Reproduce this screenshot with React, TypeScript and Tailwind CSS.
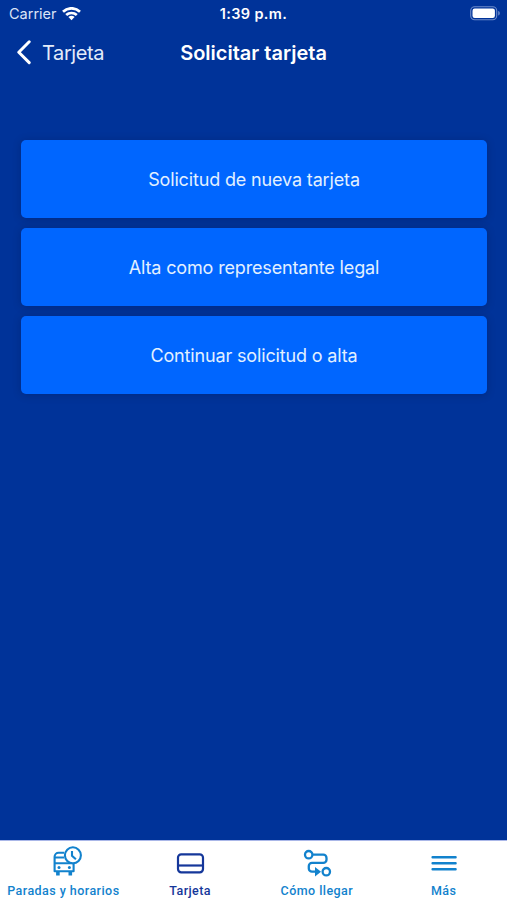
import type { ReactNode } from 'react';

const actions = [
  { id: 'new', label: 'Solicitud de nueva tarjeta' },
  { id: 'legal', label: 'Alta como representante legal' },
  { id: 'continue', label: 'Continuar solicitud o alta' },
];

function WifiIcon() {
  return (
    <svg width="19" height="15" viewBox="0 0 19 15" fill="none" stroke="white" strokeWidth="2.7">
      <path d="M1 4.7a12.3 12.3 0 0 1 17 0" />
      <path d="M4.2 8.1a7.7 7.7 0 0 1 10.6 0" />
      <path d="M9.5 13.2 6.4 10.1a4.5 4.5 0 0 1 6.2 0z" fill="white" stroke="none" />
    </svg>
  );
}

function BatteryIcon() {
  return (
    <svg width="31" height="15" viewBox="0 0 31 15" fill="none">
      <rect x="0.7" y="0.7" width="26" height="13" rx="4" stroke="#6d8cca" strokeWidth="1.1" />
      <rect x="2.5" y="2.5" width="22.4" height="9.4" rx="2.2" fill="white" />
      <path d="M28.2 5v4.6c1-.3 1.6-1.2 1.6-2.3S29.2 5.3 28.2 5z" fill="#6d8cca" />
    </svg>
  );
}

function BusClockIcon() {
  return (
    <svg width="34" height="32" viewBox="0 0 34 32" fill="none" stroke="currentColor" strokeWidth="2.1" className="ml-[6px]">
      <path d="M15 7.8H9.6a4 4 0 0 0-4 4V26.3h19v-8" strokeLinejoin="round" />
      <path d="M6 12.5h9M6 18.3h18.6" />
      <path d="M8.9 27v3.6M21.3 27v3.6" strokeWidth="3.6" />
      <circle cx="10" cy="22.5" r="1.5" fill="currentColor" stroke="none" />
      <circle cx="20.4" cy="22.5" r="1.5" fill="currentColor" stroke="none" />
      <circle cx="23.9" cy="10.3" r="8" fill="white" />
      <path d="M23 5.9v4.9l3.9 3.4" />
    </svg>
  );
}

function CardIcon() {
  return (
    <svg width="32" height="32" viewBox="0 0 32 32" fill="none" stroke="currentColor" strokeWidth="2.2">
      <rect x="4" y="9.3" width="25" height="18" rx="3.2" />
      <path d="M4 20.5h25" />
    </svg>
  );
}

function RouteIcon() {
  return (
    <svg width="32" height="32" viewBox="0 0 32 32" fill="none" stroke="currentColor" strokeWidth="2.3">
      <circle cx="7.7" cy="9.7" r="3.7" />
      <circle cx="25.3" cy="26.7" r="3.7" />
      <path d="M11.5 9.7h10.8a3.2 3.2 0 0 1 3.2 3.2v1.8a3.2 3.2 0 0 1-3.2 3.2H11a3.2 3.2 0 0 0-3.2 3.2v2.4A3.2 3.2 0 0 0 11 26.7h4" />
      <path d="m14 22 6 4.7-6 4.7z" fill="currentColor" stroke="none" />
    </svg>
  );
}

function MenuIcon() {
  return (
    <svg width="32" height="32" viewBox="0 0 32 32" fill="none" stroke="currentColor" strokeWidth="2.4">
      <path d="M4.6 12.3h23M4.6 18.3h23M4.6 24.3h23" strokeLinecap="round" />
    </svg>
  );
}

interface TabProps {
  icon: ReactNode;
  label: string;
  active?: boolean;
}

function Tab({ icon, label, active }: TabProps) {
  return (
    <button
      className={`flex flex-col items-center pt-1 ${active ? 'text-[#15379a]' : 'text-[#1282cd]'}`}
    >
      {icon}
      <span className="mt-[6px] whitespace-nowrap font-['Roboto',sans-serif] text-[12.5px] font-medium leading-4 tracking-[0.45px]">
        {label}
      </span>
    </button>
  );
}

export default function App() {
  return (
    <div className="flex h-[900px] w-[507px] flex-col overflow-hidden bg-[#003399] font-['Inter',sans-serif] text-white">
      {/* Status bar */}
      <div className="grid h-7 grid-cols-3 items-center px-[9px]">
        <div className="flex items-center gap-[5px] text-[14.5px] text-[#dbe4f6]">
          <span>Carrier</span>
          <WifiIcon />
        </div>
        <span className="text-center text-[14.5px] font-semibold tracking-[0.35px]">1:39 p.m.</span>
        <div className="-mr-[3px] flex justify-end pb-px">
          <BatteryIcon />
        </div>
      </div>

      {/* Navigation bar */}
      <header className="grid h-12 grid-cols-[1fr_auto_1fr] items-center pt-px">
        <button className="flex items-center gap-[10px] pl-[16px] text-[20px] tracking-[-0.4px] text-[#e3ebfa]">
          <svg width="16" height="26" viewBox="0 0 16 26" fill="none" stroke="white" strokeWidth="3">
            <path d="M13.2 1.8 2.8 12.2l10.4 10.4" strokeLinecap="round" strokeLinejoin="round" />
          </svg>
          <span>Tarjeta</span>
        </button>
        <h1 className="text-[20px] font-semibold">Solicitar tarjeta</h1>
      </header>

      <main className="flex flex-1 flex-col gap-[10px] pl-[21px] pr-[20px] pt-16">
        {actions.map((action) => (
          <button
            key={action.id}
            className="h-[78px] rounded-[5px] bg-[#0066ff] text-[18px] tracking-[-0.15px] text-[#e2f0ff] shadow-[0_1px_8px_rgba(0,0,40,0.22)]"
          >
            {action.label}
          </button>
        ))}
      </main>

      {/* Tab bar */}
      <nav className="grid h-[60px] grid-cols-4 border-t border-[#aab7e8] bg-white">
        <Tab icon={<BusClockIcon />} label="Paradas y horarios" />
        <Tab icon={<CardIcon />} label="Tarjeta" active />
        <Tab icon={<RouteIcon />} label="Cómo llegar" />
        <Tab icon={<MenuIcon />} label="Más" />
      </nav>
    </div>
  );
}
